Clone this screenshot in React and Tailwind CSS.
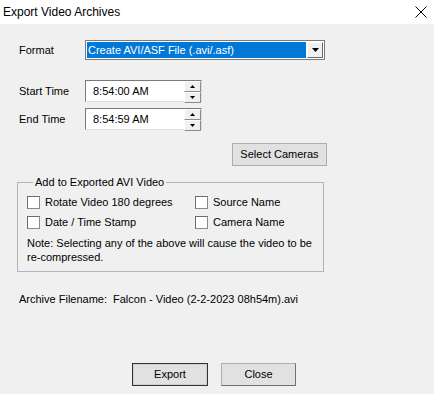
import React, { useState } from 'react';

const font = { fontFamily: '"Liberation Sans", Arial, sans-serif' };

const Spinner = () => (
  <div className="flex flex-col w-[17px] h-[22px]">
    {['up', 'down'].map((dir) => (
      <div
        key={dir}
        className="flex-1 flex items-center justify-center bg-[#f0f0f0] border-t border-l border-t-white border-l-white border-r border-b border-r-[#8c8c8c] border-b-[#8c8c8c]"
      >
        <svg width="5" height="3" viewBox="0 0 5 3">
          {dir === 'up' ? <path d="M2.5 0 L5 3 L0 3 Z" fill="#000" /> : <path d="M0 0 L5 0 L2.5 3 Z" fill="#000" />}
        </svg>
      </div>
    ))}
  </div>
);

const TimeField = ({ label, value, className }) => (
  <div className={`flex items-center h-[22px] ${className}`}>
    <span className="w-[66px] text-[11px] text-black">{label}</span>
    <div className="flex w-[117px] h-[22px] bg-white border-t border-l border-t-[#7a7a7a] border-l-[#7a7a7a] border-r border-b border-r-[#dcdcdc] border-b-[#dcdcdc]">
      <div className="flex-1 flex items-center pl-[7px] text-[11px] text-black">{value}</div>
      <Spinner />
    </div>
  </div>
);

const Check = ({ label, checked, onChange }) => (
  <label className="flex items-center h-[13px] cursor-pointer">
    <span
      onClick={onChange}
      className="w-[13px] h-[13px] bg-white border border-[#8a8a8a] border-t-[#6e6e6e] border-l-[#6e6e6e] flex items-center justify-center text-[10px] leading-none"
    >
      {checked ? '✓' : ''}
    </span>
    <span className="ml-[5px] text-[11px] text-black">{label}</span>
  </label>
);

export default function App() {
  const [opts, setOpts] = useState({ rotate: false, source: false, stamp: false, camera: false });
  const toggle = (k) => setOpts({ ...opts, [k]: !opts[k] });

  return (
    <div className="w-[434px] h-[394px] bg-[#f0f0f0] flex flex-col overflow-hidden" style={font}>
      {/* title bar */}
      <div className="h-[24px] bg-white flex items-center justify-between pl-[3px] pr-[7px]">
        <span className="text-[12px] text-black">Export Video Archives</span>
        <svg width="12" height="12" viewBox="0 0 12 12">
          <path d="M0.5 0.5 L11.5 11.5 M11.5 0.5 L0.5 11.5" stroke="#000" strokeWidth="1" />
        </svg>
      </div>

      <div className="flex flex-col pl-[19px]">
        {/* format */}
        <div className="flex items-center h-[20px] mt-[16px]">
          <span className="w-[66px] text-[11px] text-black">Format</span>
          <div className="flex w-[240px] h-[20px] bg-white border border-[#7a7a7a] p-[1px]">
            <div className="flex-1 flex items-center bg-[#0078d7] text-white text-[11px] pl-[1px]">
              Create AVI/ASF File (.avi/.asf)
            </div>
            <div className="w-[16px] ml-[1px] flex items-center justify-center bg-[#f0f0f0] border-t border-l border-t-white border-l-white border-r border-b border-r-[#696969] border-b-[#696969]">
              <svg width="7" height="4" viewBox="0 0 7 4">
                <path d="M0 0 L7 0 L3.5 4 Z" fill="#000" />
              </svg>
            </div>
          </div>
        </div>

        <TimeField label="Start Time" value="8:54:00 AM" className="mt-[20px]" />
        <TimeField label="End Time" value="8:54:59 AM" className="mt-[6px]" />

        <button className="self-start ml-[213px] mt-[13px] w-[95px] h-[23px] bg-[#e1e1e1] border border-[#adadad] text-[11px] text-black">
          Select Cameras
        </button>

        {/* group box */}
        <fieldset className="ml-[-2px] mt-[10px] w-[307px] h-[96px] border border-[#b4b4b4] px-[9px] pb-0">
          <legend className="ml-[6px] px-[2px] text-[11px] leading-[13px] text-black">Add to Exported AVI Video</legend>
          <div className="grid grid-cols-[168px_1fr] gap-y-[7px] mt-[7px]">
            <Check label="Rotate Video 180 degrees" checked={opts.rotate} onChange={() => toggle('rotate')} />
            <Check label="Source Name" checked={opts.source} onChange={() => toggle('source')} />
            <Check label="Date / Time Stamp" checked={opts.stamp} onChange={() => toggle('stamp')} />
            <Check label="Camera Name" checked={opts.camera} onChange={() => toggle('camera')} />
          </div>
          <p className="mt-[7px] text-[11px] leading-[14px] text-black">
            Note: Selecting any of the above will cause the video to be re-compressed.
          </p>
        </fieldset>

        {/* filename */}
        <div className="flex items-center h-[13px] mt-[21px] text-[11px] text-black">
          <span className="w-[94px]">Archive Filename:</span>
          <span>Falcon - Video (2-2-2023 08h54m).avi</span>
        </div>

        {/* buttons */}
        <div className="flex mt-[57px] ml-[113px] gap-[13px]">
          <button className="w-[76px] h-[23px] bg-[#e1e1e1] border border-[#333] text-[11px] text-black shadow-[inset_0_0_0_1px_#d0d0d0]">
            Export
          </button>
          <button className="w-[75px] h-[23px] bg-[#e1e1e1] border border-[#adadad] border-r-[#707070] border-b-[#707070] text-[11px] text-black">
            Close
          </button>
        </div>
      </div>
    </div>
  );
}
